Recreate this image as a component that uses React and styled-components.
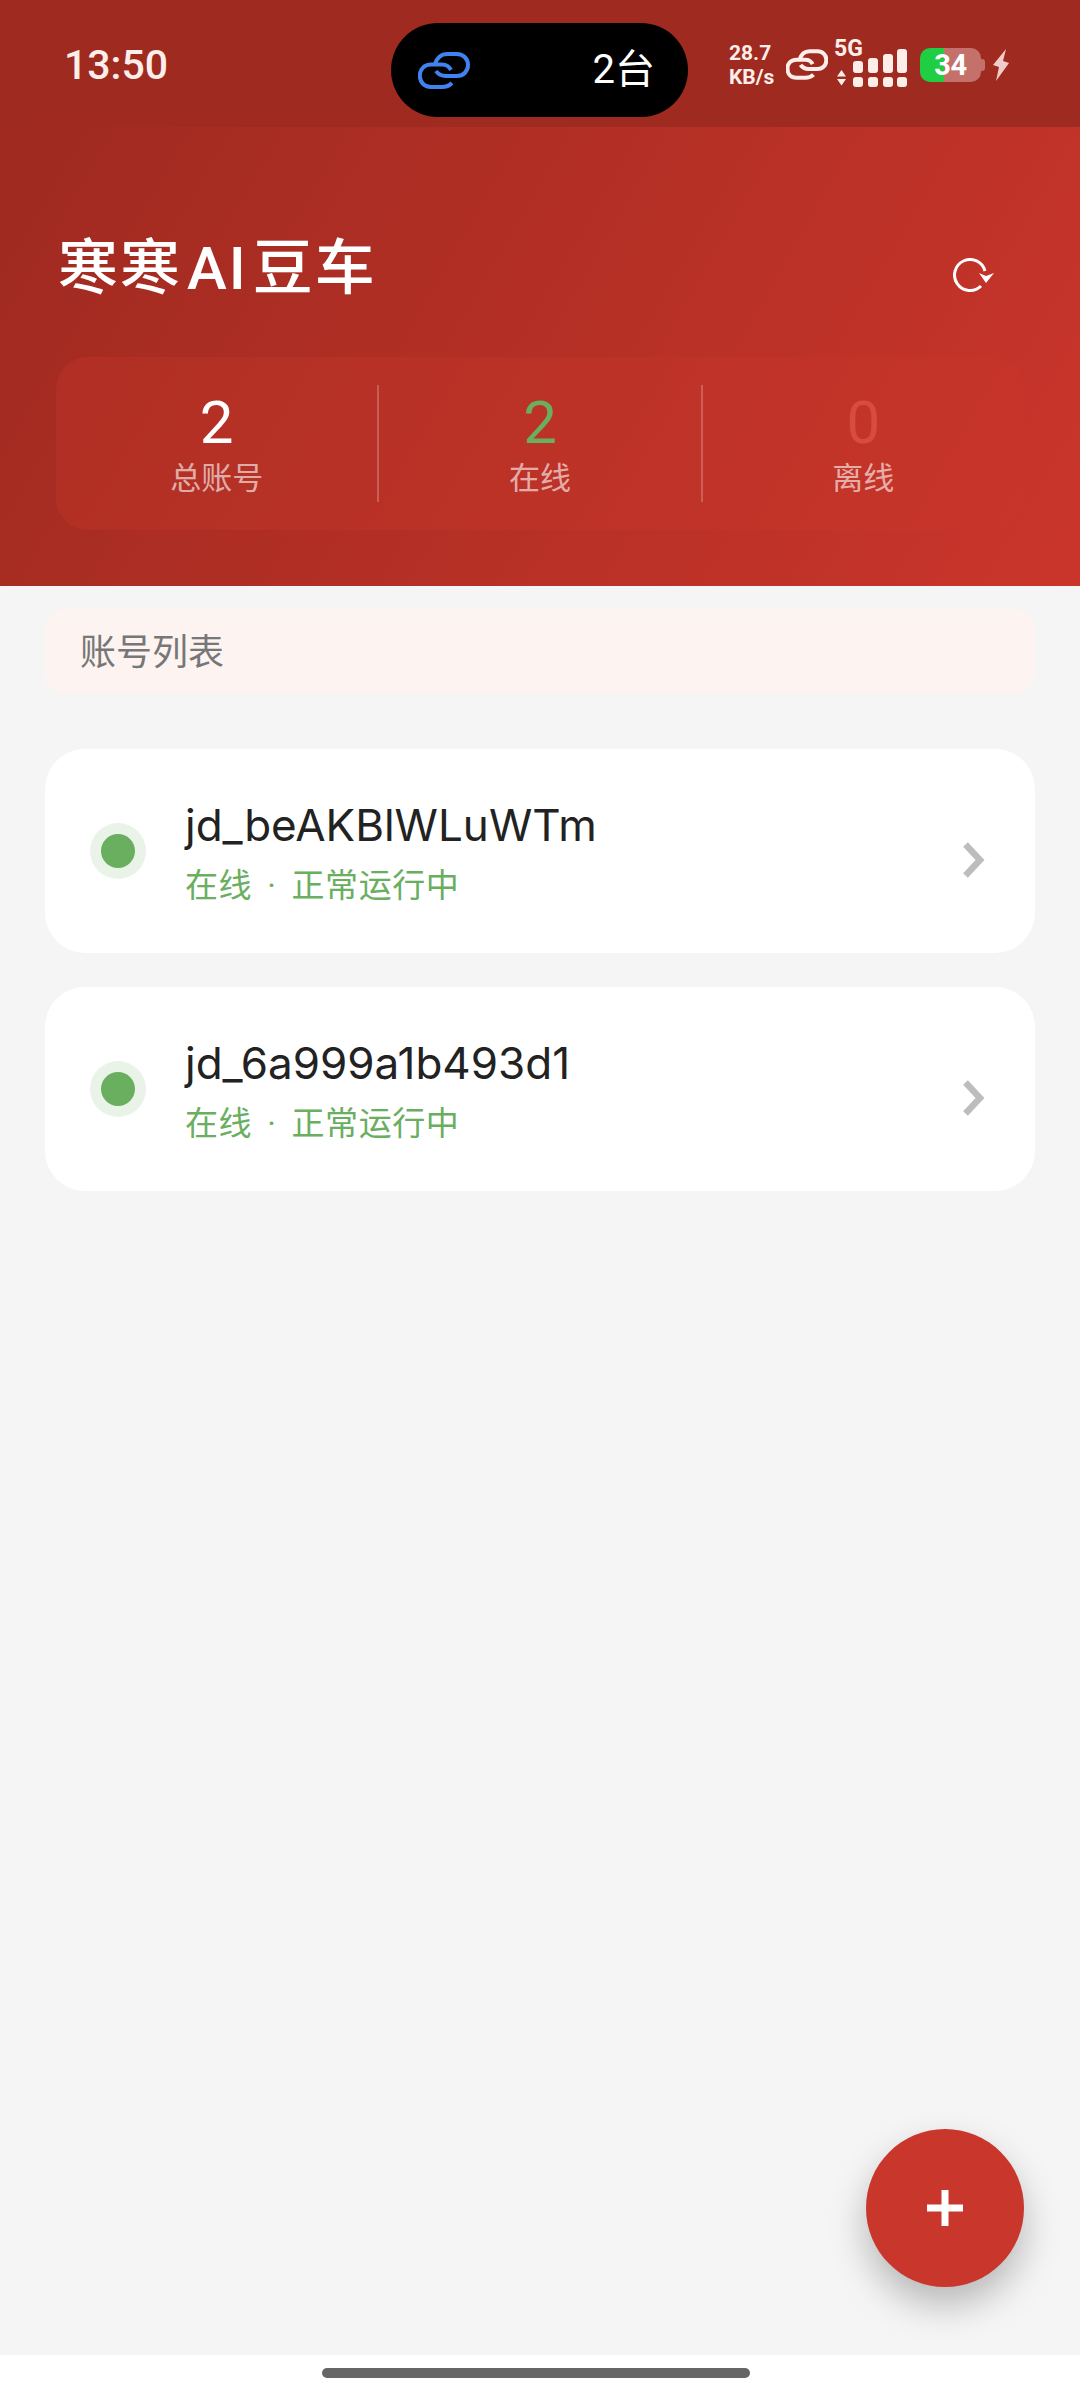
import React from 'react';
import styled, { createGlobalStyle } from 'styled-components';

const CJK = `Roboto, "Noto Sans CJK SC", sans-serif`;

const GlobalStyle = createGlobalStyle`
  html, body {
    margin: 0;
    padding: 0;
    background: #f5f5f5;
    font-family: ${CJK};
  }
  * { box-sizing: border-box; }
`;

const Page = styled.div`
  position: relative;
  display: flex;
  flex-direction: column;
  width: 1080px;
  height: 2400px;
  overflow: hidden;
  background: #f5f5f5;
`;

/* status bar */
const StatusBar = styled.div`
  display: flex;
  align-items: center;
  height: 127px;
  padding: 13px 0 0 64px;
  background: #9f2a20;
  color: #fdeeea;
`;

const Clock = styled.div`
  width: 327px;
  padding-bottom: 9px;
  font-size: 41px;
  font-weight: 500;
  line-height: 1;
`;

const Island = styled.div`
  display: flex;
  align-items: center;
  justify-content: space-between;
  width: 297px;
  height: 94px;
  padding: 0 33px 0 27px;
  border-radius: 47px;
  background: #000;
  color: #fff;
  font-size: 40px;
  line-height: 1;
`;

const StatusIcons = styled.div`
  display: flex;
  align-items: center;
  margin-left: 41px;
  margin-bottom: 11px;
`;

const Speed = styled.div`
  width: 48px;
  font-size: 21px;
  font-weight: 700;
  line-height: 24px;
  white-space: nowrap;
`;

const LinkSlot = styled.div`
  display: flex;
  margin-left: 9px;
`;

const SignalBox = styled.div`
  display: flex;
  flex-direction: column;
  width: 76px;
  margin-left: 6px;
`;

const FiveG = styled.div`
  font-size: 23px;
  font-weight: 700;
  line-height: 16px;
`;

const Battery = styled.div`
  display: flex;
  align-items: center;
  justify-content: center;
  width: 61px;
  height: 34px;
  margin-left: 10px;
  border-radius: 10px;
  overflow: hidden;
  background: linear-gradient(90deg, #1fce43 0 24px, #c3716a 24px);
  color: #fff;
  font-size: 29px;
  font-weight: 700;
  letter-spacing: -0.5px;
`;

const BatteryNub = styled.div`
  width: 4px;
  height: 12px;
  border-radius: 0 3px 3px 0;
  background: #c3716a;
`;

/* header */
const Header = styled.header`
  height: 459px;
  padding: 0 56px;
  background: linear-gradient(120deg, #9f2a20 0%, #ca352b 100%);
`;

const TitleRow = styled.div`
  display: flex;
  align-items: center;
  justify-content: space-between;
  height: 230px;
  padding: 54px 29px 0 2px;
`;

const Title = styled.h1`
  margin: 0;
  color: #fff;
  font-size: 60px;
  font-weight: 500;
  letter-spacing: 2px;
  line-height: 1;
`;

const TitleLatin = styled.span`
  margin: 0 5px;
`;

const RefreshSlot = styled.div`
  display: flex;
  margin-top: 14px;
`;

const StatCard = styled.div`
  display: flex;
  align-items: center;
  width: 968px;
  height: 173px;
  border-radius: 32px;
  background: rgba(201, 55, 44, 0.3);
`;

const Stat = styled.div`
  flex: 1;
  display: flex;
  flex-direction: column;
  align-items: center;
`;

const StatValue = styled.div`
  color: ${(p) => p.$color};
  font-size: 60px;
  font-weight: 400;
  line-height: 66px;
`;

const StatLabel = styled.div`
  margin-top: 5px;
  color: rgba(255, 255, 255, 0.62);
  font-size: 31px;
  line-height: 36px;
`;

const StatDivider = styled.div`
  width: 2px;
  height: 117px;
  background: rgba(255, 255, 255, 0.22);
`;

/* account list */
const Main = styled.main`
  flex: 1;
  padding: 23px 45px 0;
`;

const ListHeading = styled.div`
  display: flex;
  align-items: center;
  height: 84px;
  padding: 0 0 5px 35px;
  border-radius: 20px;
  background: #fdf3f1;
  color: #777;
  font-size: 36px;
`;

const AccountList = styled.div`
  display: flex;
  flex-direction: column;
  gap: 34px;
  margin-top: 56px;
`;

const AccountCard = styled.div`
  display: flex;
  align-items: center;
  height: 204px;
  padding: 0 50px 0 45px;
  border-radius: 40px;
  background: #fff;
`;

const StatusDot = styled.div`
  display: flex;
  align-items: center;
  justify-content: center;
  width: 56px;
  height: 56px;
  border-radius: 50%;
  background: #e9f3e8;
  &::after {
    content: '';
    width: 34px;
    height: 34px;
    border-radius: 50%;
    background: #6aae5f;
  }
`;

const AccountText = styled.div`
  flex: 1;
  margin-left: 39px;
  padding-top: 3px;
`;

const AccountName = styled.div`
  color: #222;
  font-family: Inter, sans-serif;
  font-size: 44px;
  line-height: 52px;
`;

const AccountState = styled.div`
  display: flex;
  margin-top: 15px;
  color: #6aae5f;
  font-size: 33px;
  letter-spacing: 0.6px;
  line-height: 40px;
`;

const StateDot = styled.span`
  margin: 0 15px;
`;

const ChevronSlot = styled.div`
  display: flex;
  margin-top: 18px;
`;

const Fab = styled.button`
  position: absolute;
  left: 866px;
  top: 2129px;
  display: flex;
  align-items: center;
  justify-content: center;
  width: 158px;
  height: 158px;
  padding: 0;
  border: 0;
  border-radius: 50%;
  background: #c9372c;
  box-shadow: 0 18px 36px rgba(0, 0, 0, 0.25);
`;

const NavBar = styled.div`
  display: flex;
  justify-content: center;
  height: 45px;
  padding-top: 13px;
  background: #fff;
`;

const HomeHandle = styled.div`
  width: 428px;
  height: 10px;
  margin-left: -8px;
  border-radius: 5px;
  background: #666;
`;

const LinkIcon = ({ color, width, height, weight = 4 }) => (
  <svg width={width} height={height} viewBox="8 11 52 37" fill="none" stroke={color} strokeWidth={weight}>
    <path d="M42 42C39 45 36 46 32 46L21 46C14 46 9.8 41 9.8 34.5C9.8 28 14.5 23.5 21 23.5L32 23.5C36 23.5 39 25 41 29" />
    <path d="M24.5 24C27 16 31 13 37 13L47 13C53.5 13 58 18 58 24C58 30 53.5 35 47 35L36 35C31 35 28 33 26 30" />
  </svg>
);

const SignalIcon = () => (
  <svg width="76" height="39" viewBox="0 0 76 39" fill="#fdeeea" style={{ marginTop: -8 }}>
    <path d="M3 27.5 L7.5 21 L12 27.5Z M3 30 L12 30 L7.5 36.5Z" />
    <rect x="19" y="12" width="10" height="12" rx="3" />
    <rect x="34" y="9" width="10" height="15" rx="3" />
    <rect x="49" y="5" width="10" height="19" rx="3" />
    <rect x="63" y="0" width="10" height="24" rx="3" />
    <rect x="19" y="28" width="10" height="10" rx="3" />
    <rect x="34" y="28" width="10" height="10" rx="3" />
    <rect x="49" y="28" width="10" height="10" rx="3" />
    <rect x="63" y="28" width="10" height="10" rx="3" />
  </svg>
);

const BoltIcon = () => (
  <svg width="16" height="32" viewBox="0 0 16 32" fill="#f0cdc8" style={{ marginLeft: 8 }}>
    <path d="M13 0 L0 16 L6 18 L3 32 L16 14 L10 12Z" />
  </svg>
);

const RefreshIcon = () => (
  <svg width="42" height="36" viewBox="0 0 42 36" fill="none">
    <path d="M32 13 A15.5 15.5 0 1 0 28 28" stroke="#fff" strokeWidth="3" />
    <path d="M26 15 L33 18 L41 15 L33 25Z" fill="#fff" />
  </svg>
);

const Chevron = () => (
  <svg width="22" height="36" viewBox="0 0 22 36" fill="none">
    <path d="M2.5 2.5 L17 18 L2.5 33.5" stroke="#bdbdbd" strokeWidth="6.5" />
  </svg>
);

const PlusIcon = () => (
  <svg width="36" height="36" viewBox="0 0 36 36" fill="#fff">
    <path d="M14.5 0h7v14.5h14.5v7h-14.5v14.5h-7v-14.5h-14.5v-7h14.5z" />
  </svg>
);

const stats = [
  { label: '总账号', value: 2, color: '#fff' },
  { label: '在线', value: 2, color: '#6aae5f' },
  { label: '离线', value: 0, color: '#d84b40' },
];

const accounts = ['jd_beAKBlWLuWTm', 'jd_6a999a1b493d1'];

export default function App() {
  return (
    <Page>
      <GlobalStyle />
      <StatusBar>
        <Clock>13:50</Clock>
        <Island>
          <LinkIcon color="#3f82f0" width={52} height={37} />
          <span>2台</span>
        </Island>
        <StatusIcons>
          <Speed>
            28.7
            <br />
            KB/s
          </Speed>
          <LinkSlot>
            <LinkIcon color="#fdeeea" width={42} height={31} weight={5} />
          </LinkSlot>
          <SignalBox>
            <FiveG>5G</FiveG>
            <SignalIcon />
          </SignalBox>
          <Battery>34</Battery>
          <BatteryNub />
          <BoltIcon />
        </StatusIcons>
      </StatusBar>

      <Header>
        <TitleRow>
          <Title>
            寒寒<TitleLatin>AI</TitleLatin>豆车
          </Title>
          <RefreshSlot>
            <RefreshIcon />
          </RefreshSlot>
        </TitleRow>
        <StatCard>
          {stats.map((s, i) => (
            <React.Fragment key={s.label}>
              {i > 0 && <StatDivider />}
              <Stat>
                <StatValue $color={s.color}>{s.value}</StatValue>
                <StatLabel>{s.label}</StatLabel>
              </Stat>
            </React.Fragment>
          ))}
        </StatCard>
      </Header>

      <Main>
        <ListHeading>账号列表</ListHeading>
        <AccountList>
          {accounts.map((name) => (
            <AccountCard key={name}>
              <StatusDot />
              <AccountText>
                <AccountName>{name}</AccountName>
                <AccountState>
                  在线<StateDot>·</StateDot>正常运行中
                </AccountState>
              </AccountText>
              <ChevronSlot>
                <Chevron />
              </ChevronSlot>
            </AccountCard>
          ))}
        </AccountList>
      </Main>

      <NavBar>
        <HomeHandle />
      </NavBar>

      <Fab aria-label="add">
        <PlusIcon />
      </Fab>
    </Page>
  );
}
